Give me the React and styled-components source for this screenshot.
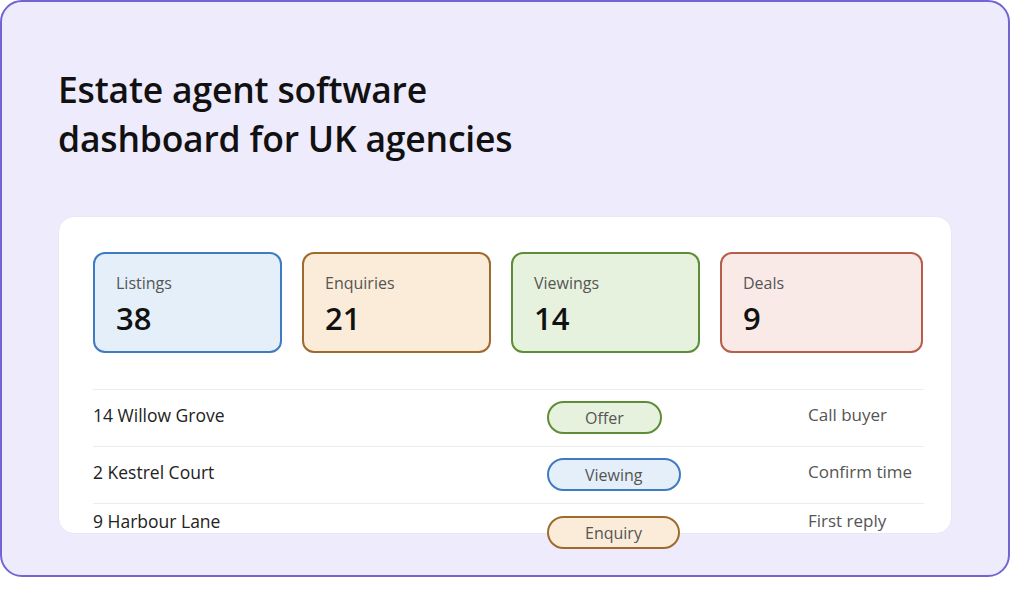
import React from 'react'
import styled, { createGlobalStyle } from 'styled-components'

const stats = [
	{ label: 'Listings', value: '38', tone: 'blue' },
	{ label: 'Enquiries', value: '21', tone: 'amber' },
	{ label: 'Viewings', value: '14', tone: 'green' },
	{ label: 'Deals', value: '9', tone: 'red' },
]

const rows = [
	{ address: '14 Willow Grove', status: 'Offer', tone: 'green', action: 'Call buyer' },
	{ address: '2 Kestrel Court', status: 'Viewing', tone: 'blue', action: 'Confirm time' },
	{ address: '9 Harbour Lane', status: 'Enquiry', tone: 'amber', action: 'First reply', cut: true },
]

const tones = {
	blue: { bg: '#e4eff9', border: '#3f7bc2' },
	amber: { bg: '#faecd9', border: '#a06a2e' },
	green: { bg: '#e7f2de', border: '#5e8d38' },
	red: { bg: '#f9eae7', border: '#b85e48' },
}

const GlobalStyle = createGlobalStyle`
	body {
		margin: 0;
		background: #ffffff;
		font-family: "Open Sans", "Noto Sans", sans-serif;
	}
`

const Frame = styled.div`
	box-sizing: border-box;
	width: 1010px;
	height: 577px;
	background: #edebfc;
	border: 2px solid #7165d2;
	border-radius: 22px;
	padding: 63px 0 0 56px;
`

const Title = styled.h1`
	margin: 0;
	font-size: 35.5px;
	line-height: 49px;
	font-weight: 600;
	color: #111111;
	letter-spacing: -0.2px;
`

const Card = styled.section`
	box-sizing: border-box;
	margin-top: 53px;
	width: 894px;
	height: 318px;
	background: #ffffff;
	border: 1px solid #e8e7f3;
	border-radius: 16px;
	padding: 35px 27px 0 34px;
`

const StatGrid = styled.div`
	display: grid;
	grid-template-columns: 189px 189px 189px 203px;
	gap: 20px;
`

const StatCard = styled.div`
	box-sizing: border-box;
	height: 101px;
	border-radius: 12px;
	border: 2px solid ${(p) => tones[p.$tone].border};
	background: ${(p) => tones[p.$tone].bg};
	padding: 18px 21px;
`

const StatLabel = styled.div`
	font-size: 16px;
	line-height: 22px;
	color: #555555;
`

const StatValue = styled.div`
	font-size: 31px;
	line-height: 40px;
	font-weight: 600;
	color: #111111;
	margin-top: 4px;
`

const List = styled.div`
	margin-top: 36px;
`

const Row = styled.div`
	display: grid;
	grid-template-columns: 454px 261px 1fr;
	align-items: start;
	height: ${(p) => (p.$cut ? '28px' : '57px')};
	border-top: 1px solid #ececf1;
	padding-top: ${(p) => (p.$cut ? '5px' : '11px')};
	box-sizing: border-box;
`

const Cell = styled.div`
	font-size: ${(p) => (p.$muted ? '17px' : '17.5px')};
	line-height: 24px;
	color: ${(p) => (p.$muted ? '#555555' : '#222222')};
	padding-top: ${(p) => (p.$cut ? '0' : '2px')};
	white-space: nowrap;
`

const Pill = styled.span`
	display: inline-flex;
	align-items: center;
	justify-content: center;
	box-sizing: border-box;
	height: 33px;
	padding: 0 36px;
	border-radius: 17px;
	border: 2px solid ${(p) => tones[p.$tone].border};
	background: ${(p) => tones[p.$tone].bg};
	font-size: 16px;
	color: #555555;
	margin-top: ${(p) => (p.$cut ? '7px' : '0')};
`

export default function App() {
	return (
		<>
			<GlobalStyle />
			<Frame>
				<Title>
					Estate agent software
					<br />
					dashboard for UK agencies
				</Title>
				<Card>
					<StatGrid>
						{stats.map((s) => (
							<StatCard key={s.label} $tone={s.tone}>
								<StatLabel>{s.label}</StatLabel>
								<StatValue>{s.value}</StatValue>
							</StatCard>
						))}
					</StatGrid>
					<List>
						{rows.map((r) => (
							<Row key={r.address} $cut={r.cut}>
								<Cell $cut={r.cut}>{r.address}</Cell>
								<div>
									<Pill $tone={r.tone} $cut={r.cut}>{r.status}</Pill>
								</div>
								<Cell $muted $cut={r.cut}>{r.action}</Cell>
							</Row>
						))}
					</List>
				</Card>
			</Frame>
		</>
	)
}
